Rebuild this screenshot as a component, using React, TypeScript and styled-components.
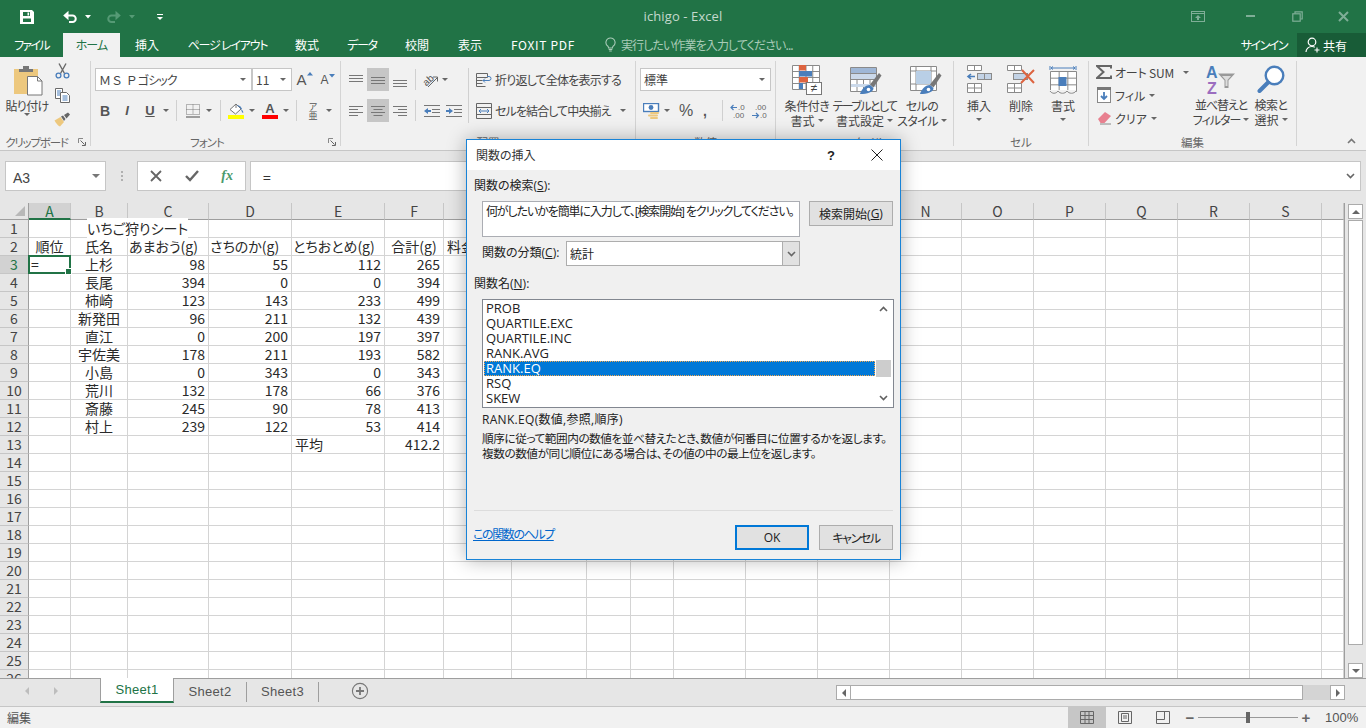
import React from "react";
import styled, { createGlobalStyle } from "styled-components";

const CJK = `"Noto Sans CJK JP", "Noto Sans", sans-serif`;
const UI = `"Open Sans", "Noto Sans CJK JP", sans-serif`;

const Global = createGlobalStyle`
  html, body { margin: 0; padding: 0; background: #fff; overflow: hidden; }
  * { box-sizing: border-box; }
  #root { width: 1366px; height: 728px; }
  svg { display: block; flex: none; }
`;

const Page = styled.div`
  position: relative; width: 1366px; height: 728px; overflow: hidden;
  display: flex; flex-direction: column;
  font-family: ${CJK}; font-feature-settings: "palt"; font-size: 12px; color: #444;
`;

/* ---------- title bar ---------- */
const TitleBar = styled.div`
  height: 33px; flex: none; background: #217346;
  display: grid; grid-template-columns: 1fr auto 1fr; align-items: center;
`;
const Qat = styled.div`display: flex; align-items: center; padding-left: 10px;`;
const Slot = styled.div<{ $w: number }>`
  width: ${p => p.$w}px; flex: none; display: flex; align-items: center; justify-content: center;
`;
const DocTitle = styled.div`font-family: ${UI}; font-size: 13px; color: #c4d9cd; letter-spacing: .1px; padding-bottom: 2px;`;
const WinBtns = styled.div`display: flex; justify-content: flex-end; align-items: center;`;
const Spacer = styled.div<{ $w: number }>`width: ${p => p.$w}px; flex: none;`;

/* ---------- tab row ---------- */
const TabRow = styled.div`
  height: 24px; flex: none; background: #217346; display: flex; align-items: stretch;
`;
const Tab = styled.div<{ $w: number; $active?: boolean; $ls?: number }>`
  width: ${p => p.$w}px; flex: none; display: flex; align-items: center; justify-content: center;
  font-size: 12px; padding-bottom: 1px; letter-spacing: ${p => p.$ls ?? 0}px; white-space: nowrap;
  color: ${p => (p.$active ? "#217346" : "#fff")};
  background: ${p => (p.$active ? "#f1f1f1" : "transparent")};
`;
const Tell = styled.div`
  display: flex; align-items: center; gap: 5px; margin-left: 16px; color: #a9cbb8; font-size: 12px;
  letter-spacing: -.9px; padding-bottom: 1px;
`;
const SignIn = styled.div`margin-left: auto; color: #fff; display: flex; align-items: center; padding: 0 10px 1px 0; letter-spacing: -1.5px;`;
const Share = styled.div`
  width: 69px; background: #185c37; color: #fff; display: flex; align-items: center; gap: 2px; padding-left: 8px;
`;

/* ---------- ribbon ---------- */
const Ribbon = styled.div`
  height: 94px; flex: none; background: #f1f1f1; border-bottom: 1px solid #c6c6c6; display: flex;
`;
const Group = styled.div<{ $w: number }>`
  width: ${p => p.$w}px; flex: none; height: 85px; margin-top: 4px; border-right: 1px solid #d4d4d4;
  display: flex; flex-direction: column;
`;
const GroupBody = styled.div<{ $pt?: number; $pl?: number }>`
  flex: 1; min-height: 0; display: flex;
  padding-top: ${p => p.$pt ?? 4}px; padding-left: ${p => p.$pl ?? 0}px;
`;
const GroupLabel = styled.div<{ $ls?: number }>`
  height: 14px; margin-bottom: -3px; display: grid; grid-template-columns: 1fr auto 1fr; align-items: center;
  font-size: 11.5px; line-height: 14px; color: #666; white-space: nowrap; letter-spacing: ${p => p.$ls ?? 0}px;
`;
const LaunchGroupLabel = styled(GroupLabel)`
  position: relative; padding-right: 17px;
`;
const Launcher = styled.div`position: absolute; right: 3px; top: 3px;`;
const RibbonEnd = styled.div`flex: 1; display: flex; justify-content: flex-end; align-items: flex-end; padding: 0 10px 6px 0;`;

const Col = styled.div<{ $w?: number; $gap?: number; $start?: boolean; $mt?: number }>`
  display: flex; flex-direction: column; align-items: ${p => (p.$start ? "flex-start" : "center")};
  ${p => (p.$w ? `width: ${p.$w}px; flex: none;` : "")}
  gap: ${p => p.$gap ?? 0}px; margin-top: ${p => p.$mt ?? 0}px;
`;
const Rows = styled.div<{ $gap?: number }>`display: flex; flex-direction: column; gap: ${p => p.$gap ?? 8}px;`;
const ToolRow = styled.div<{ $pl?: number }>`
  display: flex; align-items: center; height: 23px; padding-left: ${p => p.$pl ?? 0}px;
`;
const Combo = styled.div<{ $w: number }>`
  width: ${p => p.$w}px; height: 23px; flex: none; background: #fff; border: 1px solid #c6c6c6;
  display: flex; align-items: center; justify-content: space-between; padding: 0 5px 0 3px;
  font-size: 12px; color: #444;
`;
const FontName = styled.span`white-space: pre;`;
const FontWide = styled.span`font-feature-settings: normal;`;
const FontKana = styled.span`letter-spacing: -.9px;`;
const Caret = styled.span<{ $ml?: number }>`
  display: inline-block; flex: none; width: 0; height: 0; border-left: 3px solid transparent;
  border-right: 3px solid transparent; border-top: 3px solid #666; margin-left: ${p => p.$ml ?? 0}px;
`;
const NameCaret = styled.span`
  flex: none; width: 0; height: 0; margin-right: 5px; border-left: 4px solid transparent;
  border-right: 4px solid transparent; border-top: 4px solid #777;
`;
const Sep = styled.div<{ $mx?: number; $h?: number }>`
  width: 1px; height: ${p => p.$h ?? 21}px; background: #d0d0d0; flex: none; margin: 0 ${p => p.$mx ?? 4}px;
`;
const Hot = styled.div<{ $on?: boolean; $w?: number }>`
  width: ${p => p.$w ?? 22}px; height: 23px; flex: none; display: flex; align-items: center; justify-content: center;
  background: ${p => (p.$on ? "#c6c6c6" : "transparent")};
`;
const Large = styled.div<{ $w: number; $mt?: number }>`
  width: ${p => p.$w}px; flex: none; display: flex; flex-direction: column; align-items: center; margin-top: ${p => p.$mt ?? 0}px;
`;
const IconBox = styled.div<{ $ml?: number }>`margin-left: ${p => p.$ml ?? 0}px;`;
const LargeLabel = styled.div<{ $mt?: number; $ls?: number }>`
  font-size: 12px; line-height: 15px; color: #444; white-space: nowrap; margin-top: ${p => p.$mt ?? 0}px;
  display: flex; align-items: center; gap: 3px; letter-spacing: ${p => p.$ls ?? 0}px;
`;
const InlineTool = styled.div<{ $h?: number; $gap?: number; $ls?: number }>`
  display: flex; align-items: center; gap: ${p => p.$gap ?? 3}px; height: ${p => p.$h ?? 23}px; white-space: nowrap; font-size: 12px; color: #444;
  letter-spacing: ${p => p.$ls ?? 0}px;
`;
const LetterBtn = styled.span<{ $b?: boolean; $i?: boolean; $u?: boolean; $s?: number }>`
  font-family: "Liberation Sans", sans-serif; color: #555; line-height: 1;
  font-size: ${p => p.$s ?? 13}px;
  font-weight: ${p => (p.$b ? 700 : 400)};
  font-style: ${p => (p.$i ? "italic" : "normal")};
  text-decoration: ${p => (p.$u ? "underline" : "none")};
`;
const Grow = styled.div`display: flex; align-items: flex-start; gap: 0;`;
const ColorTool = styled.div<{ $c: string }>`
  width: 16px; display: flex; flex-direction: column; align-items: center;
  &::after { content: ""; width: 16px; height: 4px; background: ${p => p.$c}; margin-top: 0; }
`;
const Phon = styled.div`
  display: flex; flex-direction: column; align-items: center; line-height: 9px; font-size: 9px; color: #555;
`;

/* ---------- formula bar ---------- */
const FormulaBar = styled.div`
  height: 52px; flex: none; background: #e6e6e6; padding: 10px 5px 12px; display: flex; align-items: stretch;
`;
const Box = styled.div<{ $w?: number }>`
  ${p => (p.$w ? `width:${p.$w}px; flex:none;` : "flex:1;")}
  background: #fff; border: 1px solid #c6c6c6; display: flex; align-items: center;
`;
const NameText = styled.span`font-family: "Liberation Sans", sans-serif; font-size: 14px; color: #444; margin-left: 7px; padding-top: 3px; flex: 1;`;
const FxBtn = styled.div`width: 36px; display: flex; justify-content: center; align-items: center;`;
const FxText = styled.span`font-family: "Liberation Serif", serif; font-style: italic; font-weight: 700; font-size: 14px; color: #4b9a6d;`;
const Dots = styled.div`
  width: 31px; flex: none; display: flex; flex-direction: column; align-items: center; justify-content: center; gap: 2px;
  & > i { width: 2px; height: 2px; background: #b0b0b0; display: block; }
`;
const FormulaText = styled.span`font-size: 14px; color: #333; margin-left: 12px; padding-top: 2px; flex: 1;`;

/* ---------- sheet ---------- */
const SheetArea = styled.div`height: 475px; flex: none; display: flex; background: #e6e6e6;`;
const GridWrap = styled.div`
  width: 1345px; height: 475px; overflow: hidden; flex: none; border-right: 1px solid #9e9e9e;
`;
const Grid = styled.div<{ $cols: string }>`
  display: grid; width: 1344px; grid-template-columns: ${p => p.$cols};
  grid-template-rows: 17px repeat(26, 18px);
  font-family: "Noto Sans CJK JP", sans-serif; font-size: 14px; color: #2a2a2a;
`;
const Corner = styled.div`
  background: #e6e6e6; border-right: 1px solid #9e9e9e; border-bottom: 1px solid #9e9e9e;
  display: flex; align-items: flex-end; justify-content: flex-end; padding: 0 3px 3px 0;
  &::after { content: ""; width: 0; height: 0; border-left: 10px solid transparent; border-bottom: 10px solid #b8b8b8; }
`;
const ColHead = styled.div<{ $on?: boolean }>`
  background: ${p => (p.$on ? "#d2d2d2" : "#e6e6e6")};
  border-right: 1px solid #c6c6c6;
  border-bottom: ${p => (p.$on ? "2px solid #217346" : "1px solid #9e9e9e")};
  color: ${p => (p.$on ? "#217346" : "#444")};
  display: flex; align-items: center; justify-content: center; line-height: 16px; font-size: 14px;
`;
const RowHead = styled.div<{ $on?: boolean }>`
  background: ${p => (p.$on ? "#d2d2d2" : "#e6e6e6")};
  border-right: 1px solid #9e9e9e; border-bottom: 1px solid #c6c6c6;
  color: ${p => (p.$on ? "#217346" : "#444")};
  display: flex; align-items: center; justify-content: center; line-height: 17px; font-size: 14px;
`;
const Cell = styled.div<{ $a?: string; $pl?: number }>`
  position: relative; background: #fff; white-space: nowrap; line-height: 17px; height: 18px;
  border-right: 1px solid #d4d4d4; border-bottom: 1px solid #d4d4d4;
  text-align: ${p => p.$a ?? "left"};
  padding: 0 ${p => (p.$a === "right" ? 3 : 0)}px 0 ${p => p.$pl ?? 0}px;
`;
const CellOver = styled.span`position: relative; z-index: 1; background: #fff;`;
const Selection = styled.div`
  position: absolute; left: -1px; top: -1px; right: -1px; bottom: -1px; border: 2px solid #217346; z-index: 2;
  &::after { content: ""; position: absolute; right: -3px; bottom: -3px; width: 5px; height: 5px; background: #217346; border: 1px solid #fff; }
`;
const VScroll = styled.div`
  width: 21px; flex: none; display: flex; flex-direction: column; padding: 1px 3px 0 3px; align-items: stretch;
`;
const ScrollBtn = styled.div`
  height: 15px; flex: none; background: #fff; border: 1px solid #ababab; display: flex; align-items: center; justify-content: center;
`;
const VThumb = styled.div`height: 425px; flex: none; margin-top: 1px; background: #fff; border: 1px solid #ababab;`;
const VTrack = styled.div`flex: 1;`;
const TriUp = styled.span`width:0;height:0;border-left:4px solid transparent;border-right:4px solid transparent;border-bottom:4px solid #666;`;
const TriDown = styled.span`width:0;height:0;border-left:4px solid transparent;border-right:4px solid transparent;border-top:4px solid #666;`;
const TriRight = styled.span`width:0;height:0;border-top:4px solid transparent;border-bottom:4px solid transparent;border-left:4px solid #666;`;
const TriLeft = styled.span`width:0;height:0;border-top:4px solid transparent;border-bottom:4px solid transparent;border-right:4px solid #666;`;
const TriDim = styled.span<{ $dir: "l" | "r" }>`
  width:0;height:0;border-top:4px solid transparent;border-bottom:4px solid transparent;
  ${p => (p.$dir === "l" ? "border-right:4px solid #bdbdbd;" : "border-left:4px solid #bdbdbd;")}
`;

/* ---------- sheet tabs ---------- */
const SheetTabs = styled.div`
  height: 28px; flex: none; background: #e6e6e6; display: flex; align-items: flex-start;
  border-top: 1px solid #9e9e9e; font-family: "Noto Sans CJK JP", sans-serif;
`;
const TabNav = styled.div`width: 100px; height: 24px; flex: none; display: flex; align-items: center; padding-left: 25px; gap: 25px;`;
const SheetTab = styled.div<{ $on?: boolean; $w: number }>`
  width: ${p => p.$w}px; height: 24px; flex: none; margin-top: ${p => (p.$on ? -1 : 0)}px;
  display: flex; align-items: center; justify-content: center;
  font-family: "Liberation Sans", sans-serif; letter-spacing: .3px; font-size: 13px;
  color: ${p => (p.$on ? "#217346" : "#555")};
  ${p => (p.$on
    ? "background:#fff;height:25px;border-left:1px solid #9e9e9e;border-right:1px solid #9e9e9e;border-bottom:2px solid #217346;"
    : "")}
`;
const TabDiv = styled.div`width: 1px; height: 20px; background: #9e9e9e; flex: none; margin-top: 3px;`;
const AddSlot = styled.div`width: 82px; height: 24px; flex: none; display: flex; align-items: center; justify-content: center;`;
const HScrollWrap = styled.div`
  margin-left: auto; width: 530px; height: 28px; display: flex; align-items: flex-start; padding: 6px 21px 0 0; 
`;
const HBtn = styled.div`
  width: 15px; height: 15px; flex: none; background: #fff; border: 1px solid #ababab; display: flex; align-items: center; justify-content: center;
`;
const HThumb = styled.div`width: 452px; height: 15px; flex: none; background: #fff; border: 1px solid #ababab; border-left: 0;`;
const HTrack = styled.div`flex: 1; height: 15px; background: #d4d4d4;`;

/* ---------- status bar ---------- */
const StatusBar = styled.div`
  height: 22px; flex: none; background: #f1f1f1; border-top: 1px solid #c6c6c6; display: flex; align-items: stretch;
  font-size: 12px; color: #555; padding-left: 7px;
`;
const StatusText = styled.div`display: flex; align-items: center;`;
const StatusRight = styled.div`margin-left: auto; display: flex; align-items: stretch;`;
const ViewBtn = styled.div<{ $on?: boolean }>`
  width: 38px; display: flex; align-items: center; justify-content: center; background: ${p => (p.$on ? "#c6c6c6" : "transparent")};
`;
const Zoom = styled.div`display: flex; align-items: center;`;
const ZoomSign = styled.div`width: 16px; display:flex; align-items:center; justify-content:center; font-family:"Liberation Sans",sans-serif; font-weight:700; font-size:15px; color:#666;`;
const Track = styled.div`
  position: relative; width: 100px; height: 1px; background: #999;
`;
const Knob = styled.div`position: absolute; left: 48px; top: -5px; width: 4px; height: 11px; background: #666;`;
const ZoomPct = styled.div`width: 52px; padding-left: 11px; font-size: 13px; font-family:"Liberation Sans",sans-serif; color:#555; display:flex; align-items:center;`;

/* ---------- dialog ---------- */
const Dialog = styled.div`
  position: absolute; left: 466px; top: 139px; width: 435px; height: 421px; z-index: 10;
  background: #f0f0f0; border: 1px solid #1883d7;
  box-shadow: 0 0 18px rgba(0,0,0,.3);
  display: flex; flex-direction: column; font-family: ${UI}; font-size: 12px; color: #222;
`;
const DlgTitle = styled.div`
  height: 30px; flex: none; background: #fff; display: flex; align-items: center; padding-left: 9px; font-size: 12px; color: #333;
`;
const DlgBtns = styled.div`margin-left: auto; display: flex; align-items: center;`;
const Help = styled.span`font-family: "Liberation Sans", sans-serif; font-size: 13px; font-weight: 700; color: #222; width: 46px; text-align: center;`;
const DlgBody = styled.div`flex: 1; display: flex; flex-direction: column; padding: 8px 7px 9px 7px;`;
const DlgLabel = styled.div<{ $mt?: number; $ml?: number; $w?: number }>`
  line-height: 16px; margin-top: ${p => p.$mt ?? 0}px; margin-left: ${p => p.$ml ?? 0}px; flex: none; white-space: nowrap;
  ${p => (p.$w ? `width:${p.$w}px;` : "")}
`;
const Acc = styled.span`text-decoration: underline;`;
const DlgRow = styled.div<{ $mt?: number; $ml?: number }>`
  display: flex; align-items: flex-start; margin-top: ${p => p.$mt ?? 0}px; margin-left: ${p => p.$ml ?? 0}px;
`;
const SearchBox = styled.div`
  width: 318px; height: 36px; flex: none; background: #fff; border: 1px solid #abadb3; padding: 2px 3px; line-height: 16px; white-space: nowrap; overflow: hidden;
  letter-spacing: -1.1px;
`;
const DlgButton = styled.div<{ $w: number; $def?: boolean; $ls?: number }>`
  width: ${p => p.$w}px; height: 25px; flex: none; background: #e1e1e1;
  border: ${p => (p.$def ? "2px solid #0078d7" : "1px solid #adadad")};
  display: flex; align-items: center; justify-content: center; letter-spacing: ${p => p.$ls ?? 0}px;
`;
const Select = styled.div`
  width: 234px; height: 25px; flex: none; background: #fff; border: 1px solid #adadad; display: flex; align-items: center; padding-left: 3px;
`;
const SelectBtn = styled.div`
  margin-left: auto; width: 17px; height: 23px; background: #e1e1e1; border-left: 1px solid #adadad; display: flex; align-items: center; justify-content: center;
`;
const ListBox = styled.div`
  width: 412px; height: 109px; flex: none; background: #fff; border: 1px solid #828790; display: flex; padding: 0 1px; margin: 7px 0 0 8px;
  font-size: 13px;
`;
const ListItems = styled.div`flex: 1; display: flex; flex-direction: column; min-width: 0; padding: 1px 1px 0 0;`;
const ListItem = styled.div<{ $on?: boolean }>`
  height: 15px; line-height: 15px; padding-left: 2px; flex: none;
  ${p => (p.$on ? "background:#0078d7;color:#fff;outline:1px dotted #f3a64d;outline-offset:-1px;" : "")}
`;
const ListScroll = styled.div`width: 15px; flex: none; display: flex; flex-direction: column; align-items: center; margin-right: 1px;`;
const ListThumb = styled.div`width: 100%; height: 17px; flex: none; margin-top: 42px; background: #cdcdcd;`;
const ListChev = styled.div<{ $auto?: boolean }>`
  height: 18px; flex: none; display: flex; align-items: center; justify-content: center; ${p => (p.$auto ? "margin-top:auto;" : "")}
`;
const Signature = styled.div`margin: 4px 0 0 8px; line-height: 15px; flex: none; letter-spacing: .3px;`;
const Desc = styled.div`margin: 4px 0 0 8px; line-height: 15px; flex: none; white-space: nowrap; font-size: 11.7px; letter-spacing: -.5px;`;
const Divider = styled.div`height: 1px; background: #dcdcdc; margin-top: auto; flex: none;`;
const DlgFooter = styled.div`display: flex; align-items: center; margin-top: 14px; height: 25px; flex: none; gap: 10px;`;
const HelpLink = styled.span`color: #0066cc; text-decoration: underline; margin: -7px auto 0 -1px; letter-spacing: -1.4px;`;

/* ---------- icons ---------- */
const I = ({ w, h, children }: { w: number; h: number; children: React.ReactNode }) => (
  <svg width={w} height={h} viewBox={`0 0 ${w} ${h}`}>{children}</svg>
);
const GR = "#6a6a6a", BL = "#4a7ebb", OR = "#dd6440", GD = "#edc87e", DIM = "#7fae97";

const Save = () => (
  <I w={16} h={16}>
    <path fillRule="evenodd" d="M1 1h12l2 2v12H1zM4 3v4h7V3zM4 9.5V13h8V9.5z" fill="#fff" />
    <rect x="8.5" y="3.5" width="1.6" height="3" fill="#fff" />
  </I>
);
const Undo = ({ c, flip }: { c: string; flip?: boolean }) => (
  <I w={16} h={14}>
    <g transform={flip ? "translate(16,0) scale(-1,1)" : undefined}>
      <path d="M3 5.5h7.5a3.2 3.2 0 0 1 0 6.5H7" fill="none" stroke={c} strokeWidth="2" />
      <path d="M6.5 0.8L1.2 5.5 6.5 10.2z" fill={c} />
    </g>
  </I>
);
const SmallCaret = ({ c }: { c: string }) => (
  <I w={6} h={4}><path d="M0 0h6L3 3.5z" fill={c} /></I>
);
const Customize = () => (
  <I w={8} h={8}><path d="M1 1h6v1H1z" fill="#fff" /><path d="M1 4h6L4 7z" fill="#fff" /></I>
);
const WinDisplay = () => (
  <I w={14} h={11}>
    <rect x=".5" y=".5" width="13" height="10" fill="none" stroke={DIM} />
    <path d="M1 2.5h12" stroke={DIM} />
    <path d="M7 4l3 3H8v2H6V7H4z" fill={DIM} />
  </I>
);
const WinMin = () => <I w={10} h={3}><rect y="0" width="9" height="2" fill={DIM} /></I>;
const WinRestore = () => (
  <I w={11} h={11}>
    <path d="M3 2.5V.8h7.2V8H8.5" fill="none" stroke={DIM} strokeWidth="1.2" />
    <rect x=".8" y="2.8" width="7.4" height="7.4" fill="none" stroke={DIM} strokeWidth="1.2" />
  </I>
);
const WinClose = () => (
  <I w={11} h={11}><path d="M1 1l9 9M10 1l-9 9" stroke={DIM} strokeWidth="2" /></I>
);
const Bulb = () => (
  <I w={11} h={15}>
    <path d="M5.5 1a4.5 4.5 0 0 0-2.6 8.2c.5.5.6 1.3.6 1.8h4c0-.5.1-1.3.6-1.8A4.5 4.5 0 0 0 5.5 1z" fill="none" stroke="#a9cbb8" strokeWidth="1.1" />
    <path d="M3.7 12.5h3.6M4.2 14h2.6" stroke="#a9cbb8" />
  </I>
);
const Person = () => (
  <I w={16} h={16}>
    <circle cx="7" cy="5" r="3.8" fill="none" stroke="#fff" strokeWidth="1.2" />
    <path d="M1 15c0-3 2.5-5.5 6-5.5 1 0 2 .2 2.8.7" fill="none" stroke="#fff" strokeWidth="1.2" />
    <path d="M12 10.5v5M9.5 13h5" stroke="#fff" strokeWidth="1.1" />
  </I>
);
const Paste = () => (
  <I w={30} h={31}>
    <rect x="1" y="4" width="24" height="25" fill={GD} />
    <path d="M6 4h14v3H6zM10 1h6v3h-6z" fill="#777" />
    <path d="M14.5 11.5h10l4.5 4.5v14H14.5z" fill="#fff" stroke="#777" />
    <path d="M24.5 11.5V16H29" fill="none" stroke="#777" />
  </I>
);
const Scissors = () => (
  <I w={15} h={16}>
    <path d="M4 0.5l5.5 10M11 0.5l-5.5 10" stroke={GR} strokeWidth="1.4" />
    <circle cx="3.5" cy="12.5" r="2.4" fill="none" stroke={BL} strokeWidth="1.3" />
    <circle cx="11.5" cy="12.5" r="2.4" fill="none" stroke={BL} strokeWidth="1.3" />
  </I>
);
const Copy = () => (
  <I w={15} h={15}>
    <path d="M.5.5h7l0 10H.5z" fill="#fff" stroke={GR} />
    <path d="M5.5 4.5h6l3 3v7h-9z" fill="#fff" stroke={GR} />
    <path d="M2 3h4M2 5h3M2 7h3M7.5 8h5M7.5 10h5M7.5 12h5" stroke={BL} />
  </I>
);
const Painter = () => (
  <I w={17} h={15}>
    <path d="M0.5 8.5l6-3.5 3.5 5-4 4.5c-2-.5-4-3.5-5.5-6z" fill={GD} />
    <path d="M7 4.5l2 -1 2.5 3.5-1.5 2zM10 3l4-2.5 2 2-3.5 4z" fill="#666" />
  </I>
);
const Launch = () => (
  <I w={9} h={9}>
    <path d="M.5 5V.5H5" fill="none" stroke="#888" />
    <path d="M2.5 2.5l4 4M7.5 4v3.5H4" fill="none" stroke="#666" />
  </I>
);
const TriSmall = ({ c, down }: { c: string; down?: boolean }) => (
  <I w={6} h={4}><path d={down ? "M0 0h6L3 3.5z" : "M0 3.5h6L3 0z"} fill={c} /></I>
);
const Borders = () => (
  <I w={14} h={14}>
    <path d="M.5.5h13v10H.5zM.5 5.5h13M7 .5v10" fill="none" stroke="#777" strokeDasharray="1 1" />
    <path d="M0 13h14" stroke="#666" strokeWidth="1.2" />
  </I>
);
const Bucket = () => (
  <I w={16} h={12}>
    <path d="M2 6.5L8 1l5 5-5.5 5z" fill="#fff" stroke="#777" />
    <path d="M8 1V5" stroke="#777" />
    <path d="M13 6c1.6 1.2 2.5 2.6 2.2 4-.8 0-1.7-1.5-2.2-4z" fill={BL} />
    <path d="M9.5 2.5c1.6.3 3.2 1.4 4 3.5" stroke={BL} fill="none" strokeWidth="1.2" />
  </I>
);
const AlignV = ({ y }: { y: number }) => (
  <I w={14} h={16}>
    <path d={`M0 ${y}.5h14M0 ${y + 3}.5h14M0 ${y + 6}.5h14`} stroke="#777" />
  </I>
);
const AlignH = ({ m }: { m: "l" | "c" | "r" }) => {
  const rows: [number, number][] = [[14, 2], [9, 5], [14, 8], [9, 11]];
  const xs = (w: number) => (m === "l" ? 0 : m === "r" ? 14 - w : (14 - w) / 2);
  return (
    <I w={14} h={14}>
      {rows.map(([w, y]) => <path key={y} d={`M${xs(w)} ${y}.5h${w}`} stroke="#777" />)}
    </I>
  );
};
const Orient = () => (
  <I w={17} h={16}>
    <text x="1" y="12" transform="rotate(-42 6 9)" fontFamily="Liberation Sans" fontSize="10" fill="#555">ab</text>
    <path d="M6 15L15 6M11 5h4.5v4.5" stroke="#666" fill="none" />
  </I>
);
const Indent = ({ out }: { out?: boolean }) => (
  <I w={16} h={12}>
    <path d="M0 .5h16M8 4.5h8M8 7.5h8M0 11.5h16" stroke="#777" />
    <path d={out ? "M0 6l4-3v2h3v2H4v2z" : "M7 6L3 3v2H0v2h3v2z"} fill={BL} />
  </I>
);
const Wrap = () => (
  <I w={16} h={16}>
    <path d="M.5 1.5h11v4H.5zM.5 5.5v9h9M.5 8.5h6M.5 11.5h6" fill="none" stroke="#666" />
    <path d="M7 8.5h6a1.8 1.8 0 0 0 0-4h-2M9 10.5L7 8.5l2-2" fill="none" stroke={BL} />
  </I>
);
const Merge = () => (
  <I w={16} h={16}>
    <path d="M.5.5h15v15H.5zM.5 4.5h15M.5 11.5h15" fill="none" stroke="#666" />
    <path d="M3 8h10M5 6L3 8l2 2M11 6l2 2-2 2" fill="none" stroke={BL} />
  </I>
);
const Currency = () => (
  <I w={18} h={16}>
    <rect x=".5" y=".5" width="15" height="8" fill="#fff" stroke={BL} strokeWidth="1.4" />
    <circle cx="8" cy="4.5" r="2.4" fill={BL} />
    <rect x="7" y="9" width="9" height="2" rx="1" fill={GD} />
    <rect x="5" y="11.5" width="10" height="2" rx="1" fill={GD} />
    <rect x="7" y="14" width="8" height="2" rx="1" fill={GD} />
  </I>
);
const DecTool = ({ inc }: { inc?: boolean }) => (
  <I w={17} h={16}>
    <text x={inc ? 8 : 3} y="7" fontFamily="Liberation Sans" fontSize="8" fill="#666">{inc ? ".0" : ".00"}</text>
    <text x={inc ? 3 : 8} y="15" fontFamily="Liberation Sans" fontSize="8" fill="#666">{inc ? ".00" : ".0"}</text>
    {inc
      ? <path d="M7 4.5H1M3.5 2L1 4.5 3.5 7" stroke={BL} fill="none" strokeWidth="1.2" />
      : <path d="M0 12.5h6M4 10l2.5 2.5L4 15" stroke={BL} fill="none" strokeWidth="1.2" />}
  </I>
);
const SheetLines = ({ x = 0, y = 0, w = 30, h = 24, cols = 4, rows = 4, c = "#8a8a8a" }: any) => {
  const d: string[] = [`M${x + .5} ${y + .5}h${w}v${h}h-${w}z`];
  for (let i = 1; i < cols; i++) d.push(`M${x + .5 + (w * i) / cols} ${y}v${h}`);
  for (let i = 1; i < rows; i++) d.push(`M${x} ${y + .5 + (h * i) / rows}h${w}`);
  return <path d={d.join("")} fill="#fff" stroke={c} />;
};
const CondFmt = () => (
  <I w={31} h={31}>
    <SheetLines x={0} y={0} w={27} h={24} cols={4} rows={4} />
    <rect x="7" y="0" width="7" height="5.5" fill={OR} />
    <rect x="7" y="6" width="13" height="5.5" fill={BL} />
    <rect x="7" y="12" width="9" height="5.5" fill={OR} />
    <rect x="7" y="18" width="4" height="6" fill={BL} />
    <rect x="14.5" y="17.5" width="15" height="12" fill="#fff" stroke="#777" />
    <text x="22" y="27" textAnchor="middle" fontFamily="Liberation Sans" fontSize="12" fill="#444">≠</text>
  </I>
);
const Brush = () => (
  <g>
    <path d="M10 29c1-4 5-9 10-9l3.5 3c0 4-6 6-13.5 6z" fill={BL} />
    <circle cx="18.5" cy="24.5" r="1.8" fill="#fff" />
    <path d="M20 19.5L29 8l2.5 2.5L23.5 22.5z" fill="#777" />
  </g>
);
const TableFmt = () => (
  <I w={32} h={30}>
    <SheetLines x={0} y={2} w={26} h={24} cols={4} rows={4} />
    <rect x="1" y="3" width="25" height="5" fill="#9fb7d6" />
    <rect x="1" y="9" width="25" height="5" fill="#cbd9ea" />
    <rect x="1" y="19" width="25" height="3" fill="#cbd9ea" />
    <Brush />
  </I>
);
const CellFmt = () => (
  <I w={32} h={30}>
    <SheetLines x={0} y={1} w={26} h={24} cols={1} rows={1} />
    <path d="M.5 6h26M6 1v24M21 1v24M.5 19h26" stroke="#8a8a8a" />
    <rect x="6" y="6" width="15" height="13" fill="#b9cfe6" />
    <Brush />
  </I>
);
const InsertIc = () => (
  <I w={26} h={28}>
    <SheetLines x={1} y={0} w={14} h={5} cols={2} rows={1} />
    <SheetLines x={1} y={18} w={14} h={9} cols={2} rows={2} />
    <rect x="11.5" y="8.5" width="14" height="6" fill="#c3d3e6" stroke="#8a8a8a" />
    <path d="M18.5 8.5v6" stroke="#8a8a8a" />
    <path d="M9 11.5H2M5 9L2 11.5 5 14" stroke={BL} strokeWidth="1.6" fill="none" />
  </I>
);
const DeleteIc = () => (
  <I w={30} h={28}>
    <SheetLines x={1} y={0} w={14} h={5} cols={2} rows={1} />
    <SheetLines x={1} y={18} w={14} h={9} cols={2} rows={2} />
    <rect x="7.5" y="8.5" width="14" height="6" fill="#c3d3e6" stroke="#8a8a8a" />
    <path d="M16 5l12 13M28 5L15 18" stroke={OR} strokeWidth="2" />
  </I>
);
const FormatIc = () => (
  <I w={29} h={30}>
    <path d="M1 1v4M27 1v4M2 3h24M2 3l2-1.5M2 3l2 1.5M26 3l-2-1.5M26 3l-2 1.5" stroke={BL} fill="none" />
    <SheetLines x={1} y={6} w={26} h={20} cols={3} rows={3} />
    <rect x="9.5" y="12" width="8" height="9" fill={BL} />
    <path d="M1 26h26" stroke="#f1f1f1" strokeWidth="2" />
    <path d="M1 26c2 3 6 3 8 0 2 3 7 3 9 0 2 3 7 3 9 0" fill="none" stroke="#8a8a8a" />
  </I>
);
const Sigma = () => (
  <I w={16} h={14}><path d="M15 3.5V1H1l6.5 6L1 13h14v-2.5" fill="none" stroke="#666" strokeWidth="2" /></I>
);
const FillIc = () => (
  <I w={14} h={16}>
    <rect x=".5" y=".5" width="13" height="15" fill="#fff" stroke="#888" />
    <rect width="14" height="3" fill="#777" />
    <path d="M7 5v7M4 9l3 3 3-3" stroke={BL} strokeWidth="1.8" fill="none" />
  </I>
);
const Eraser = () => (
  <I w={15} h={14}>
    <path d="M1 8l7-7 6 4-6.5 7H3.5z" fill="#e8808f" />
    <path d="M3 13h11" stroke="#888" />
  </I>
);
const SortIc = () => (
  <I w={31} h={30}>
    <text x="0" y="13" fontFamily="Liberation Sans" fontWeight="700" fontSize="16" fill={BL}>A</text>
    <text x="1" y="29" fontFamily="Liberation Sans" fontWeight="700" fontSize="16" fill="#9b6dbf">Z</text>
    <path d="M12 8.5h17l-6.5 7V23h-4v-7.5z" fill="#999" />
    <path d="M16 11h9l-3.5 4v6h-2v-6z" fill="#ddd" />
  </I>
);
const Magnifier = () => (
  <I w={28} h={28}>
    <circle cx="17.5" cy="10.5" r="8.8" fill="#fff" stroke={BL} strokeWidth="2.4" />
    <path d="M11 17.5L2.5 26" stroke={BL} strokeWidth="4" strokeLinecap="round" />
  </I>
);
const Chevron = ({ up, c = "#606060" }: { up?: boolean; c?: string }) => (
  <I w={9} h={6}>
    <path d={up ? "M1 5l3.5-3.5L8 5" : "M1 1l3.5 3.5L8 1"} fill="none" stroke={c} strokeWidth="1.6" />
  </I>
);
const XMark = () => <I w={12} h={12}><path d="M1 1l10 10M11 1L1 11" stroke="#666" strokeWidth="1.8" /></I>;
const Check = () => <I w={14} h={12}><path d="M1 6l4 4 8-9" fill="none" stroke="#666" strokeWidth="2.4" /></I>;
const DlgClose = () => <I w={12} h={12}><path d="M.5.5l11 11M11.5.5l-11 11" stroke="#222" strokeWidth="1" /></I>;
const Plus = () => (
  <I w={18} h={18}>
    <circle cx="9" cy="9" r="7.6" fill="none" stroke="#777" strokeWidth="1.1" />
    <path d="M5 9h8M9 5v8" stroke="#777" strokeWidth="1.8" />
  </I>
);
const NormalV = () => (
  <I w={14} h={13}><path d="M.5.5h13v12H.5zM.5 4.5h13M.5 8.5h13M5 .5v12M9 .5v12" fill="none" stroke="#666" /></I>
);
const PageV = () => (
  <I w={14} h={13}>
    <path d="M.5.5h13v12H.5z" fill="none" stroke="#666" />
    <path d="M3.5 2.5h7v8h-7zM5 5h4M5 7h4" fill="none" stroke="#666" />
  </I>
);
const BreakV = () => (
  <I w={14} h={13}><path d="M.5.5h13v12H.5zM.5 8.5h8V.5" fill="none" stroke="#666" /></I>
);

/* ---------- data ---------- */
const colWidths = [42, 57, 81, 83, 93, 59, 68, 75, 44, 43, 72, 72, 72, 72, 72, 72, 72, 72, 72, 22];
const colNames = "ABCDEFGHIJKLMNOPQRS ".split("");
const tableRows: [string, number, number, number, number][] = [
  ["上杉", 98, 55, 112, 265],
  ["長尾", 394, 0, 0, 394],
  ["柿崎", 123, 143, 233, 499],
  ["新発田", 96, 211, 132, 439],
  ["直江", 0, 200, 197, 397],
  ["宇佐美", 178, 211, 193, 582],
  ["小島", 0, 343, 0, 343],
  ["荒川", 132, 178, 66, 376],
  ["斎藤", 245, 90, 78, 413],
  ["村上", 239, 122, 53, 414],
];
type C = { t: string; a?: string; pl?: number };
const cellAt = (r: number, c: number): C | null => {
  if (r === 1 && c === 1) return { t: "いちご狩りシート", pl: 16 };
  if (r === 2) {
    const h: (C | null)[] = [
      { t: "順位", a: "center" }, { t: "氏名", a: "center" }, { t: "あまおう(g)", pl: 1 }, { t: "さちのか(g)", pl: 1 },
      { t: "とちおとめ(g)", pl: 1 }, { t: "合計(g)", a: "center" }, { t: "料金", pl: 3 },
    ];
    return h[c] ?? null;
  }
  if (r >= 3 && r <= 12) {
    const d = tableRows[r - 3];
    if (c === 1) return { t: d[0], a: "center" };
    if (c >= 2 && c <= 5) return { t: String(d[c - 1]), a: "right" };
  }
  if (r === 13 && c === 4) return { t: "平均", pl: 3 };
  if (r === 13 && c === 5) return { t: "412.2", a: "right" };
  return null;
};

const tabs: [string, number, boolean?, number?][] = [
  ["ファイル", 63, false, -1.7], ["ホーム", 57, true, -1], ["挿入", 54], ["ページ レイアウト", 107, false, -1.2], ["数式", 52],
  ["データ", 58, false, -1.2], ["校閲", 52], ["表示", 54], ["FOXIT PDF", 92, false, .7],
];
const funcs = ["PROB", "QUARTILE.EXC", "QUARTILE.INC", "RANK.AVG", "RANK.EQ", "RSQ", "SKEW"];

function Sheet() {
  const cells: React.ReactNode[] = [];
  cells.push(<Corner key="corner" />);
  colNames.forEach((n, i) => cells.push(<ColHead key={"h" + i} $on={i === 0}>{n.trim()}</ColHead>));
  for (let r = 1; r <= 26; r++) {
    cells.push(<RowHead key={"r" + r} $on={r === 3}>{r}</RowHead>);
    colWidths.forEach((_, c) => {
      const d = cellAt(r, c);
      const sel = r === 3 && c === 0;
      cells.push(
        <Cell key={r + "-" + c} $a={d?.a} $pl={sel ? 2 : d?.pl}>
          {sel ? "=" : d ? (r === 1 ? <CellOver>{d.t}</CellOver> : d.t) : null}
          {sel && <Selection />}
        </Cell>
      );
    });
  }
  return <Grid $cols={`29px ${colWidths.map(w => w + "px").join(" ")}`}>{cells}</Grid>;
}

export default function App() {
  return (
    <Page>
      <Global />
      <TitleBar>
        <Qat>
          <Slot $w={34}><Save /></Slot>
          <Spacer $w={18} />
          <Slot $w={16}><Undo c="#fff" /></Slot>
          <Slot $w={20}><SmallCaret c="#fff" /></Slot>
          <Spacer $w={6} />
          <Slot $w={20}><Undo c="#559a75" flip /></Slot>
          <Slot $w={16}><SmallCaret c="#559a75" /></Slot>
          <Spacer $w={12} />
          <Slot $w={16}><Customize /></Slot>
        </Qat>
        <DocTitle>ichigo - Excel</DocTitle>
        <WinBtns>
          <Slot $w={47}><WinDisplay /></Slot>
          <Spacer $w={7} />
          <Slot $w={46}><WinMin /></Slot>
          <Slot $w={46}><WinRestore /></Slot>
          <Slot $w={46}><WinClose /></Slot>
        </WinBtns>
      </TitleBar>

      <TabRow>
        {tabs.map(([t, w, a, ls]) => <Tab key={t} $w={w} $active={a} $ls={ls}>{t}</Tab>)}
        <Tell><Bulb />実行したい作業を入力してください...</Tell>
        <SignIn>サインイン</SignIn>
        <Share><Person />共有</Share>
      </TabRow>

      <Ribbon>
        <Group $w={91}>
          <GroupBody $pl={2}>
            <Col $w={50}>
              <IconBox $ml={2}><Paste /></IconBox>
              <LargeLabel $mt={2} $ls={-.7}>貼り付け</LargeLabel>
              <LargeLabel><Caret /></LargeLabel>
            </Col>
            <Col $w={20} $gap={9} $mt={-2}>
              <Scissors />
              <Copy />
              <Painter />
            </Col>
          </GroupBody>
          <LaunchGroupLabel $ls={-1.2}><span />クリップボード<Launcher><Launch /></Launcher></LaunchGroupLabel>
        </Group>

        <Group $w={250}>
          <GroupBody $pt={7} $pl={4}>
            <Rows>
              <ToolRow>
                <Combo $w={157}>
                  <FontName><FontWide>ＭＳ Ｐ</FontWide><FontKana>ゴシック</FontKana></FontName>
                  <Caret />
                </Combo>
                <Combo $w={40}><span>11</span><Caret /></Combo>
                <Slot $w={25}>
                  <Grow><LetterBtn $s={15}>A</LetterBtn><TriSmall c={BL} /></Grow>
                </Slot>
                <Slot $w={21}>
                  <Grow><LetterBtn $s={12}>A</LetterBtn><TriSmall c={BL} down /></Grow>
                </Slot>
              </ToolRow>
              <ToolRow $pl={2}>
                <Slot $w={16}><LetterBtn $b $s={14}>B</LetterBtn></Slot>
                <Spacer $w={4} />
                <Slot $w={20}><LetterBtn $b $i $s={13}>I</LetterBtn></Slot>
                <Slot $w={26}><LetterBtn $b $u $s={13}>U</LetterBtn></Slot>
                <Slot $w={6}><Caret /></Slot>
                <Sep $mx={7} />
                <Slot $w={17}><Borders /></Slot>
                <Slot $w={16}><Caret /></Slot>
                <Sep $mx={3} />
                <Slot $w={24}>
                  <ColorTool $c="#ffff00"><Bucket /></ColorTool>
                </Slot>
                <Slot $w={8}><Caret /></Slot>
                <Slot $w={28}>
                  <ColorTool $c="#ff0000"><LetterBtn $b $s={13}>A</LetterBtn></ColorTool>
                </Slot>
                <Slot $w={4}><Caret /></Slot>
                <Sep $mx={8} />
                <Slot $w={16}><Phon><span>ア</span><span>亜</span></Phon></Slot>
                <Slot $w={16}><Caret /></Slot>
              </ToolRow>
            </Rows>
          </GroupBody>
          <LaunchGroupLabel $ls={-1}><span />フォント<Launcher><Launch /></Launcher></LaunchGroupLabel>
        </Group>

        <Group $w={295}>
          <GroupBody $pt={7} $pl={4}>
            <Rows>
              <ToolRow>
                <Hot><AlignV y={3} /></Hot>
                <Hot $on><AlignV y={5} /></Hot>
                <Hot><AlignV y={8} /></Hot>
                <Sep $mx={4} />
                <Slot $w={20}><Orient /></Slot>
                <Slot $w={10}><Caret /></Slot>
                <Spacer $w={14} />
              </ToolRow>
              <ToolRow>
                <Hot><AlignH m="l" /></Hot>
                <Hot $on><AlignH m="c" /></Hot>
                <Hot><AlignH m="r" /></Hot>
                <Sep $mx={4} />
                <Slot $w={23}><Indent out /></Slot>
                <Slot $w={21}><Indent /></Slot>
              </ToolRow>
            </Rows>
            <Sep $mx={4} $h={55} />
            <Rows>
              <InlineTool $gap={0} $ls={-.8}><Slot $w={22}><Wrap /></Slot>折り返して全体を表示する</InlineTool>
              <InlineTool $gap={0} $ls={-.9}><Slot $w={22}><Merge /></Slot>セルを結合して中央揃え<Caret $ml={9} /></InlineTool>
            </Rows>
          </GroupBody>
          <GroupLabel><span />配置<span /></GroupLabel>
        </Group>

        <Group $w={140}>
          <GroupBody $pt={7} $pl={4}>
            <Rows>
              <Combo $w={131}><span>標準</span><Caret /></Combo>
              <ToolRow $pl={3}>
                <Slot $w={18}><Currency /></Slot>
                <Slot $w={12}><Caret /></Slot>
                <Slot $w={26}><LetterBtn $s={16}>%</LetterBtn></Slot>
                <Slot $w={12}><LetterBtn $b $s={14}>,</LetterBtn></Slot>
                <Spacer $w={11} />
                <Sep $mx={0} />
                <Spacer $w={7} />
                <Slot $w={17}><DecTool inc /></Slot>
                <Spacer $w={5} />
                <Slot $w={17}><DecTool /></Slot>
              </ToolRow>
            </Rows>
          </GroupBody>
          <GroupLabel><span />数値<span /></GroupLabel>
        </Group>

        <Group $w={178}>
          <GroupBody $pl={6}>
            <Large $w={50}>
              <CondFmt />
              <LargeLabel $mt={2} $ls={-.4}>条件付き</LargeLabel>
              <LargeLabel>書式<Caret /></LargeLabel>
            </Large>
            <Large $w={65}>
              <IconBox $ml={2}><TableFmt /></IconBox>
              <LargeLabel $mt={3} $ls={-1.6}>テーブルとして</LargeLabel>
              <LargeLabel>書式設定<Caret /></LargeLabel>
            </Large>
            <Large $w={50}>
              <IconBox $ml={8}><CellFmt /></IconBox>
              <LargeLabel $mt={3} $ls={-.6}>セルの</LargeLabel>
              <LargeLabel $ls={-.6}>スタイル<Caret /></LargeLabel>
            </Large>
          </GroupBody>
          <GroupLabel><span />スタイル<span /></GroupLabel>
        </Group>

        <Group $w={135}>
          <GroupBody $pl={4}>
            <Large $w={42}>
              <InsertIc />
              <LargeLabel $mt={5}>挿入</LargeLabel>
              <LargeLabel $mt={5}><Caret /></LargeLabel>
            </Large>
            <Large $w={42}>
              <DeleteIc />
              <LargeLabel $mt={5}>削除</LargeLabel>
              <LargeLabel $mt={5}><Caret /></LargeLabel>
            </Large>
            <Large $w={42}>
              <FormatIc />
              <LargeLabel $mt={3}>書式</LargeLabel>
              <LargeLabel $mt={5}><Caret /></LargeLabel>
            </Large>
          </GroupBody>
          <GroupLabel><span />セル<span /></GroupLabel>
        </Group>

        <Group $w={208}>
          <GroupBody $pt={0} $pl={7}>
            <Col $w={100} $start>
              <InlineTool $h={22} $ls={-.2}>
                <Slot $w={16}><Sigma /></Slot>オート SUM<Caret $ml={6} />
              </InlineTool>
              <InlineTool $h={24}>
                <Slot $w={16}><FillIc /></Slot>フィル<Caret $ml={1} />
              </InlineTool>
              <InlineTool $h={22}>
                <Slot $w={16}><Eraser /></Slot>クリア<Caret $ml={1} />
              </InlineTool>
            </Col>
            <Large $w={50} $mt={4}>
              <SortIc />
              <LargeLabel $mt={2} $ls={-1.1}>並べ替えと</LargeLabel>
              <LargeLabel $ls={-1}>フィルター<Caret /></LargeLabel>
            </Large>
            <Large $w={50} $mt={4}>
              <Magnifier />
              <LargeLabel $mt={4} $ls={-.6}>検索と</LargeLabel>
              <LargeLabel>選択<Caret /></LargeLabel>
            </Large>
          </GroupBody>
          <GroupLabel><span />編集<span /></GroupLabel>
        </Group>
        <RibbonEnd><Chevron up c="#777" /></RibbonEnd>
      </Ribbon>

      <FormulaBar>
        <Box $w={101}><NameText>A3</NameText><NameCaret /></Box>
        <Dots><i /><i /><i /></Dots>
        <Box $w={109}>
          <FxBtn><XMark /></FxBtn>
          <FxBtn><Check /></FxBtn>
          <FxBtn><FxText>fx</FxText></FxBtn>
        </Box>
        <Spacer $w={4} />
        <Box>
          <FormulaText>=</FormulaText>
          <Slot $w={20}><Chevron c="#666" /></Slot>
        </Box>
      </FormulaBar>

      <SheetArea>
        <GridWrap><Sheet /></GridWrap>
        <VScroll>
          <ScrollBtn><TriUp /></ScrollBtn>
          <VThumb />
          <VTrack />
          <ScrollBtn><TriDown /></ScrollBtn>
        </VScroll>
      </SheetArea>

      <SheetTabs>
        <TabNav><TriDim $dir="l" /><TriDim $dir="r" /></TabNav>
        <SheetTab $on $w={74}>Sheet1</SheetTab>
        <SheetTab $w={72}>Sheet2</SheetTab>
        <TabDiv />
        <SheetTab $w={71}>Sheet3</SheetTab>
        <TabDiv />
        <AddSlot><Plus /></AddSlot>
        <HScrollWrap>
          <HBtn><TriLeft /></HBtn>
          <HThumb />
          <HTrack />
          <HBtn><TriRight /></HBtn>
        </HScrollWrap>
      </SheetTabs>

      <StatusBar>
        <StatusText>編集</StatusText>
        <StatusRight>
          <ViewBtn $on><NormalV /></ViewBtn>
          <ViewBtn><PageV /></ViewBtn>
          <ViewBtn><BreakV /></ViewBtn>
          <Zoom>
            <ZoomSign>−</ZoomSign>
            <Track><Knob /></Track>
            <ZoomSign>+</ZoomSign>
            <ZoomPct>100%</ZoomPct>
          </Zoom>
        </StatusRight>
      </StatusBar>

      <Dialog>
        <DlgTitle>
          関数の挿入
          <DlgBtns>
            <Help>?</Help>
            <Slot $w={46}><DlgClose /></Slot>
          </DlgBtns>
        </DlgTitle>
        <DlgBody>
          <DlgLabel>関数の検索(<Acc>S</Acc>):</DlgLabel>
          <DlgRow $mt={7} $ml={8}>
            <SearchBox>何がしたいかを簡単に入力して、[検索開始] をクリックしてください。</SearchBox>
            <Spacer $w={9} />
            <DlgButton $w={84}>検索開始(<Acc>G</Acc>)</DlgButton>
          </DlgRow>
          <DlgRow $mt={4} $ml={8}>
            <DlgLabel $mt={4} $w={84}>関数の分類(<Acc>C</Acc>):</DlgLabel>
            <Select>統計<SelectBtn><Chevron c="#666" /></SelectBtn></Select>
          </DlgRow>
          <DlgLabel $mt={10}>関数名(<Acc>N</Acc>):</DlgLabel>
          <ListBox>
            <ListItems>
              {funcs.map(f => <ListItem key={f} $on={f === "RANK.EQ"}>{f}</ListItem>)}
            </ListItems>
            <ListScroll>
              <ListChev><Chevron up /></ListChev>
              <ListThumb />
              <ListChev $auto><Chevron /></ListChev>
            </ListScroll>
          </ListBox>
          <Signature>RANK.EQ(数値,参照,順序)</Signature>
          <Desc>
            順序に従って範囲内の数値を並べ替えたとき、数値が何番目に位置するかを返します。<br />
            複数の数値が同じ順位にある場合は、その値の中の最上位を返します。
          </Desc>
          <Divider />
          <DlgFooter>
            <HelpLink>この関数のヘルプ</HelpLink>
            <DlgButton $w={74} $def>OK</DlgButton>
            <DlgButton $w={74} $ls={-1.4}>キャンセル</DlgButton>
          </DlgFooter>
        </DlgBody>
      </Dialog>
    </Page>
  );
}
